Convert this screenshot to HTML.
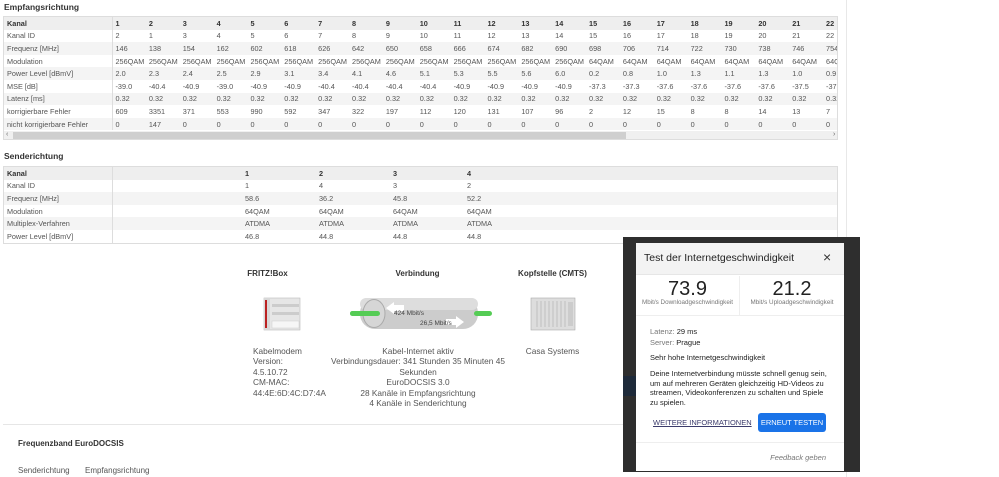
<!DOCTYPE html>
<html><head><meta charset="utf-8"><style>
*{margin:0;padding:0;box-sizing:border-box}
body{width:999px;height:477px;background:#fff;font-family:"Liberation Sans",sans-serif;color:#444;position:relative;overflow:hidden}
.a{position:absolute;white-space:nowrap}
h3{position:absolute;font-size:8.5px;font-weight:bold;color:#333}
.wrap{position:absolute;left:3px;width:835px;overflow:hidden}
table{border-collapse:collapse;font-size:7.3px;table-layout:fixed}
td{height:12.6px;padding:0 0 0 3px;white-space:nowrap;overflow:hidden;color:#555}
tr:nth-child(odd) td{background:#f4f4f4}
tr:nth-child(even) td{background:#fff}
tr:first-child td{background:#eee;font-weight:bold;color:#333}
td.l{border-right:1px solid #ddd;color:#555}
tr:first-child td.l{color:#333}
.c{text-align:center;font-size:8.3px;color:#555;line-height:10.4px}
</style></head><body>
<div style="position:absolute;left:846px;top:0;width:1px;height:477px;background:#e8e8e8"></div>
<h3 style="left:4px;top:2px">Empfangsrichtung</h3>
<div class="wrap" style="top:16px;border:1px solid #ddd;height:124px">
<table style="width:853px">
<colgroup><col style="width:108px"><col span="22" style="width:33.86px"></colgroup>
<tr><td class="l">Kanal</td><td>1</td><td>2</td><td>3</td><td>4</td><td>5</td><td>6</td><td>7</td><td>8</td><td>9</td><td>10</td><td>11</td><td>12</td><td>13</td><td>14</td><td>15</td><td>16</td><td>17</td><td>18</td><td>19</td><td>20</td><td>21</td><td>22</td></tr>
<tr><td class="l">Kanal ID</td><td>2</td><td>1</td><td>3</td><td>4</td><td>5</td><td>6</td><td>7</td><td>8</td><td>9</td><td>10</td><td>11</td><td>12</td><td>13</td><td>14</td><td>15</td><td>16</td><td>17</td><td>18</td><td>19</td><td>20</td><td>21</td><td>22</td></tr>
<tr><td class="l">Frequenz [MHz]</td><td>146</td><td>138</td><td>154</td><td>162</td><td>602</td><td>618</td><td>626</td><td>642</td><td>650</td><td>658</td><td>666</td><td>674</td><td>682</td><td>690</td><td>698</td><td>706</td><td>714</td><td>722</td><td>730</td><td>738</td><td>746</td><td>754</td></tr>
<tr><td class="l">Modulation</td><td>256QAM</td><td>256QAM</td><td>256QAM</td><td>256QAM</td><td>256QAM</td><td>256QAM</td><td>256QAM</td><td>256QAM</td><td>256QAM</td><td>256QAM</td><td>256QAM</td><td>256QAM</td><td>256QAM</td><td>256QAM</td><td>64QAM</td><td>64QAM</td><td>64QAM</td><td>64QAM</td><td>64QAM</td><td>64QAM</td><td>64QAM</td><td>64QAM</td></tr>
<tr><td class="l">Power Level [dBmV]</td><td>2.0</td><td>2.3</td><td>2.4</td><td>2.5</td><td>2.9</td><td>3.1</td><td>3.4</td><td>4.1</td><td>4.6</td><td>5.1</td><td>5.3</td><td>5.5</td><td>5.6</td><td>6.0</td><td>0.2</td><td>0.8</td><td>1.0</td><td>1.3</td><td>1.1</td><td>1.3</td><td>1.0</td><td>0.9</td></tr>
<tr><td class="l">MSE [dB]</td><td>-39.0</td><td>-40.4</td><td>-40.9</td><td>-39.0</td><td>-40.9</td><td>-40.9</td><td>-40.4</td><td>-40.4</td><td>-40.4</td><td>-40.4</td><td>-40.9</td><td>-40.9</td><td>-40.9</td><td>-40.9</td><td>-37.3</td><td>-37.3</td><td>-37.6</td><td>-37.6</td><td>-37.6</td><td>-37.6</td><td>-37.5</td><td>-37.5</td></tr>
<tr><td class="l">Latenz [ms]</td><td>0.32</td><td>0.32</td><td>0.32</td><td>0.32</td><td>0.32</td><td>0.32</td><td>0.32</td><td>0.32</td><td>0.32</td><td>0.32</td><td>0.32</td><td>0.32</td><td>0.32</td><td>0.32</td><td>0.32</td><td>0.32</td><td>0.32</td><td>0.32</td><td>0.32</td><td>0.32</td><td>0.32</td><td>0.32</td></tr>
<tr><td class="l">korrigierbare Fehler</td><td>609</td><td>3351</td><td>371</td><td>553</td><td>990</td><td>592</td><td>347</td><td>322</td><td>197</td><td>112</td><td>120</td><td>131</td><td>107</td><td>96</td><td>2</td><td>12</td><td>15</td><td>8</td><td>8</td><td>14</td><td>13</td><td>7</td></tr>
<tr><td class="l">nicht korrigierbare Fehler</td><td>0</td><td>147</td><td>0</td><td>0</td><td>0</td><td>0</td><td>0</td><td>0</td><td>0</td><td>0</td><td>0</td><td>0</td><td>0</td><td>0</td><td>0</td><td>0</td><td>0</td><td>0</td><td>0</td><td>0</td><td>0</td><td>0</td></tr>
</table>
<div style="position:absolute;left:0;top:114px;width:835px;height:9px;background:#f0f0f0"></div>
<div style="position:absolute;left:9px;top:115px;width:613px;height:7px;background:#cfcfcf"></div>
<div class="a" style="left:2px;top:114px;font-size:7px;color:#666">&lsaquo;</div>
<div class="a" style="left:829px;top:114px;font-size:7px;color:#666">&rsaquo;</div>
</div>

<h3 style="left:4px;top:151px">Senderichtung</h3>
<div class="wrap" style="top:166px;border:1px solid #ddd">
<table style="width:833px">
<colgroup><col style="width:108px"><col style="width:130px"><col style="width:74px"><col style="width:74px"><col style="width:74px"><col></colgroup>
<tr><td class="l">Kanal</td><td></td><td>1</td><td>2</td><td>3</td><td>4</td></tr>
<tr><td class="l">Kanal ID</td><td></td><td>1</td><td>4</td><td>3</td><td>2</td></tr>
<tr><td class="l">Frequenz [MHz]</td><td></td><td>58.6</td><td>36.2</td><td>45.8</td><td>52.2</td></tr>
<tr><td class="l">Modulation</td><td></td><td>64QAM</td><td>64QAM</td><td>64QAM</td><td>64QAM</td></tr>
<tr><td class="l">Multiplex-Verfahren</td><td></td><td>ATDMA</td><td>ATDMA</td><td>ATDMA</td><td>ATDMA</td></tr>
<tr><td class="l">Power Level [dBmV]</td><td></td><td>46.8</td><td>44.8</td><td>44.8</td><td>44.8</td></tr>
</table></div>

<div class="a" style="left:230px;top:269px;width:75px;text-align:center;font-size:8px;font-weight:bold;color:#333">FRITZ!Box</div>
<div class="a" style="left:360px;top:269px;width:115px;text-align:center;font-size:8px;font-weight:bold;color:#333">Verbindung</div>
<div class="a" style="left:510px;top:269px;width:85px;text-align:center;font-size:8px;font-weight:bold;color:#333">Kopfstelle (CMTS)</div>

<svg class="a" style="left:262px;top:296px" width="40" height="36" viewBox="0 0 40 36">
<rect x="2" y="2" width="36" height="32" fill="#e6e6e6" stroke="#bbb" stroke-width=".6"/>
<rect x="2" y="2" width="6" height="32" fill="#d8d8d8"/>
<rect x="3" y="4" width="2" height="28" fill="#b22"/>
<rect x="10" y="8" width="27" height="3" fill="#ccc"/><rect x="10" y="16" width="27" height="3" fill="#ccc"/>
<rect x="10" y="25" width="27" height="7" fill="#f6f6f6" stroke="#ccc" stroke-width=".5"/>
</svg>
<svg class="a" style="left:348px;top:296px" width="145" height="36" viewBox="0 0 145 36">
<rect x="2" y="15" width="140" height="5" rx="2.5" fill="#6c6"/>
<rect x="12" y="2" width="118" height="31" rx="15" fill="#ccc"/>
<rect x="12" y="2" width="118" height="12" rx="6" fill="#ddd"/>
<ellipse cx="26" cy="17.5" rx="11" ry="14" fill="#d6d6d6" stroke="#aaa"/>
<rect x="2" y="15" width="30" height="5" rx="2.5" fill="#5c5"/>
<rect x="126" y="15" width="18" height="5" rx="2.5" fill="#5c5"/>
<path d="M38 12 L46 6 L46 9 L56 9 L56 15 L46 15 L46 18 Z" fill="#fff"/>
<path d="M108 20 L116 26 L108 32 L108 29 L98 29 L98 23 L108 23 Z" fill="#fff"/>
<text x="46" y="19" font-size="6.5" fill="#444" font-family="Liberation Sans">424 Mbit/s</text>
<text x="72" y="29" font-size="6.5" fill="#444" font-family="Liberation Sans">26,5 Mbit/s</text>
</svg>
<svg class="a" style="left:529px;top:296px" width="48" height="36" viewBox="0 0 48 36">
<rect x="2" y="2" width="44" height="32" fill="#ddd" stroke="#aaa" stroke-width=".6"/>
<g stroke="#aaa" stroke-width=".6"><path d="M8 5V31M12 5V31M16 5V31M20 5V31M24 5V31M28 5V31M32 5V31M36 5V31"/></g>
<rect x="39" y="6" width="5" height="24" fill="#ccc"/>
</svg>

<div class="a c" style="left:253px;top:346px;text-align:left">Kabelmodem<br>Version:<br>4.5.10.72<br>CM-MAC:<br>44:4E:6D:4C:D7:4A</div>
<div class="a c" style="left:300px;top:346px;width:236px">Kabel-Internet aktiv<br>Verbindungsdauer: 341 Stunden 35 Minuten 45<br>Sekunden<br>EuroDOCSIS 3.0<br>28 Kanäle in Empfangsrichtung<br>4 Kanäle in Senderichtung</div>
<div class="a c" style="left:510px;top:346px;width:85px">Casa Systems</div>

<div style="position:absolute;left:3px;top:424px;width:840px;height:1px;background:#e6e6e6"></div>
<div class="a" style="left:18px;top:439px;font-size:8px;font-weight:bold;color:#333">Frequenzband EuroDOCSIS</div>
<div class="a" style="left:18px;top:466px;font-size:8px;color:#555">Senderichtung</div>
<div class="a" style="left:85px;top:466px;font-size:8px;color:#555">Empfangsrichtung</div>

<div style="position:absolute;left:623px;top:237px;width:237px;height:235px;background:#2e2e2e"></div>
<div style="position:absolute;left:623px;top:376px;width:13px;height:20px;background:#1e2a3a"></div>
<div style="position:absolute;left:636px;top:243px;width:208px;height:228px;background:#fff;font-family:'Liberation Sans',sans-serif">
<div style="height:32px;background:#f3f3f3;border-bottom:1px solid #e6e6e6;position:relative">
<div class="a" style="left:8px;top:9px;font-size:10.5px;color:#222">Test der Internetgeschwindigkeit</div>
<div class="a" style="left:187px;top:6px;font-size:14px;color:#333">×</div></div>
<div style="position:absolute;left:0;top:33px;width:208px;height:40px;border-bottom:1px solid #eee"></div>
<div style="position:absolute;left:103px;top:33px;width:1px;height:40px;background:#eee"></div>
<div class="a" style="left:0;top:35px;width:103px;text-align:center;font-size:20px;color:#222">73.9</div>
<div class="a" style="left:0;top:56px;width:103px;text-align:center;font-size:6.3px;color:#777">Mbit/s Downloadgeschwindigkeit</div>
<div class="a" style="left:104px;top:35px;width:104px;text-align:center;font-size:20px;color:#222">21.2</div>
<div class="a" style="left:104px;top:56px;width:104px;text-align:center;font-size:6.3px;color:#777">Mbit/s Uploadgeschwindigkeit</div>
<div class="a" style="left:14px;top:83px;font-size:7.5px;color:#777;line-height:11px">Latenz: <span style="color:#222">29 ms</span><br>Server: <span style="color:#222">Prague</span></div>
<div class="a" style="left:14px;top:110px;font-size:7.5px;color:#222">Sehr hohe Internetgeschwindigkeit</div>
<div class="a" style="left:14px;top:126px;font-size:7.5px;color:#222;line-height:9.6px">Deine Internetverbindung müsste schnell genug sein,<br>um auf mehreren Geräten gleichzeitig HD-Videos zu<br>streamen, Videokonferenzen zu schalten und Spiele<br>zu spielen.</div>
<div class="a" style="left:17px;top:175px;font-size:7.5px;color:#3c3c6c;text-decoration:underline">WEITERE INFORMATIONEN</div>
<div class="a" style="left:122px;top:170px;width:68px;height:19px;background:#1a73e8;border-radius:3px;color:#fff;font-size:7.5px;text-align:center;line-height:19px">ERNEUT TESTEN</div>
<div style="position:absolute;left:0;top:199px;width:208px;height:1px;background:#eee"></div>
<div class="a" style="right:18px;top:210px;font-size:7.5px;color:#777;font-style:italic">Feedback geben</div>
</div>
</body></html>
